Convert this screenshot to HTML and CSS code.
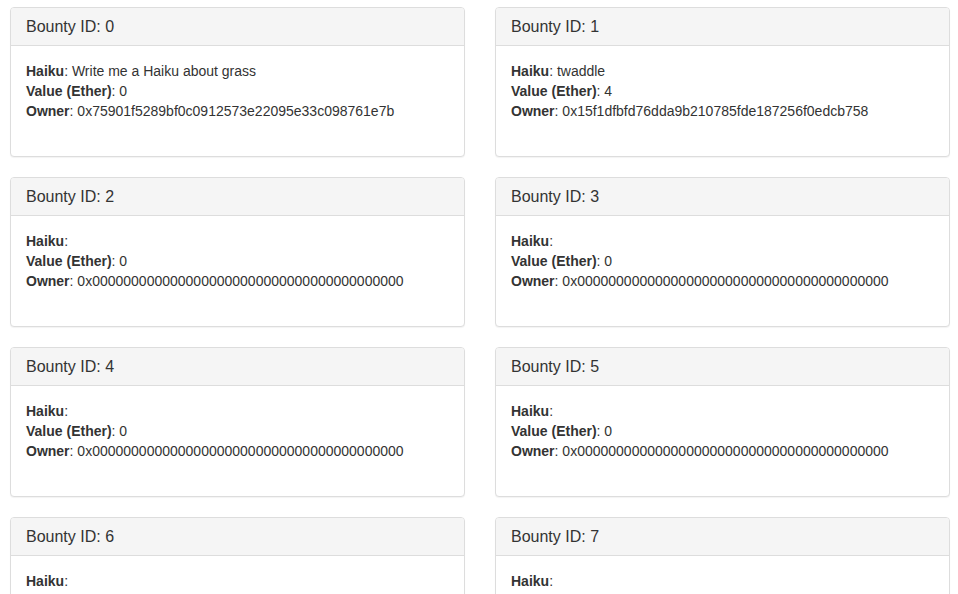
FILE: index.html
```html
<!DOCTYPE html>
<html>
<head>
<meta charset="utf-8">
<link rel="stylesheet" href="styles.css">
</head>
<body>
<div class="grid">
  <div class="panel">
    <div class="panel-heading"><h3 class="panel-title">Bounty ID: 0</h3></div>
    <div class="panel-body">
      <div><b>Haiku</b>: Write me a Haiku about grass</div>
      <div><b>Value (Ether)</b>: 0</div>
      <div><b>Owner</b>: 0x75901f5289bf0c0912573e22095e33c098761e7b</div>
    </div>
  </div>
  <div class="panel">
    <div class="panel-heading"><h3 class="panel-title">Bounty ID: 1</h3></div>
    <div class="panel-body">
      <div><b>Haiku</b>: twaddle</div>
      <div><b>Value (Ether)</b>: 4</div>
      <div><b>Owner</b>: 0x15f1dfbfd76dda9b210785fde187256f0edcb758</div>
    </div>
  </div>
  <div class="panel">
    <div class="panel-heading"><h3 class="panel-title">Bounty ID: 2</h3></div>
    <div class="panel-body">
      <div><b>Haiku</b>:</div>
      <div><b>Value (Ether)</b>: 0</div>
      <div><b>Owner</b>: 0x0000000000000000000000000000000000000000</div>
    </div>
  </div>
  <div class="panel">
    <div class="panel-heading"><h3 class="panel-title">Bounty ID: 3</h3></div>
    <div class="panel-body">
      <div><b>Haiku</b>:</div>
      <div><b>Value (Ether)</b>: 0</div>
      <div><b>Owner</b>: 0x0000000000000000000000000000000000000000</div>
    </div>
  </div>
  <div class="panel">
    <div class="panel-heading"><h3 class="panel-title">Bounty ID: 4</h3></div>
    <div class="panel-body">
      <div><b>Haiku</b>:</div>
      <div><b>Value (Ether)</b>: 0</div>
      <div><b>Owner</b>: 0x0000000000000000000000000000000000000000</div>
    </div>
  </div>
  <div class="panel">
    <div class="panel-heading"><h3 class="panel-title">Bounty ID: 5</h3></div>
    <div class="panel-body">
      <div><b>Haiku</b>:</div>
      <div><b>Value (Ether)</b>: 0</div>
      <div><b>Owner</b>: 0x0000000000000000000000000000000000000000</div>
    </div>
  </div>
  <div class="panel">
    <div class="panel-heading"><h3 class="panel-title">Bounty ID: 6</h3></div>
    <div class="panel-body">
      <div><b>Haiku</b>:</div>
      <div><b>Value (Ether)</b>: 0</div>
      <div><b>Owner</b>: 0x0000000000000000000000000000000000000000</div>
    </div>
  </div>
  <div class="panel">
    <div class="panel-heading"><h3 class="panel-title">Bounty ID: 7</h3></div>
    <div class="panel-body">
      <div><b>Haiku</b>:</div>
      <div><b>Value (Ether)</b>: 0</div>
      <div><b>Owner</b>: 0x0000000000000000000000000000000000000000</div>
    </div>
  </div>
</div>
</body>
</html>
```
FILE: styles.css
```css
html, body {
  margin: 0;
  padding: 0;
  background: #fff;
  overflow: hidden;
}
body {
  font-family: "Liberation Sans", Arial, sans-serif;
  font-size: 14px;
  line-height: 20px;
  color: #333;
}
.grid {
  display: grid;
  grid-template-columns: 455px 455px;
  column-gap: 30px;
  row-gap: 20px;
  padding: 7px 0 0 10px;
}
.panel {
  background: #fff;
  border: 1px solid #ddd;
  border-radius: 4px;
  box-shadow: 0 1px 1px rgba(0,0,0,0.05);
}
.panel-heading {
  background: #f5f5f5;
  border-bottom: 1px solid #ddd;
  border-radius: 3px 3px 0 0;
  padding: 10px 15px;
}
.panel-title {
  margin: 0;
  font-size: 16px;
  font-weight: 400;
  line-height: 17px;
}
.panel-body {
  padding: 15px 15px 35px;
}
b {
  font-weight: 700;
}
```
